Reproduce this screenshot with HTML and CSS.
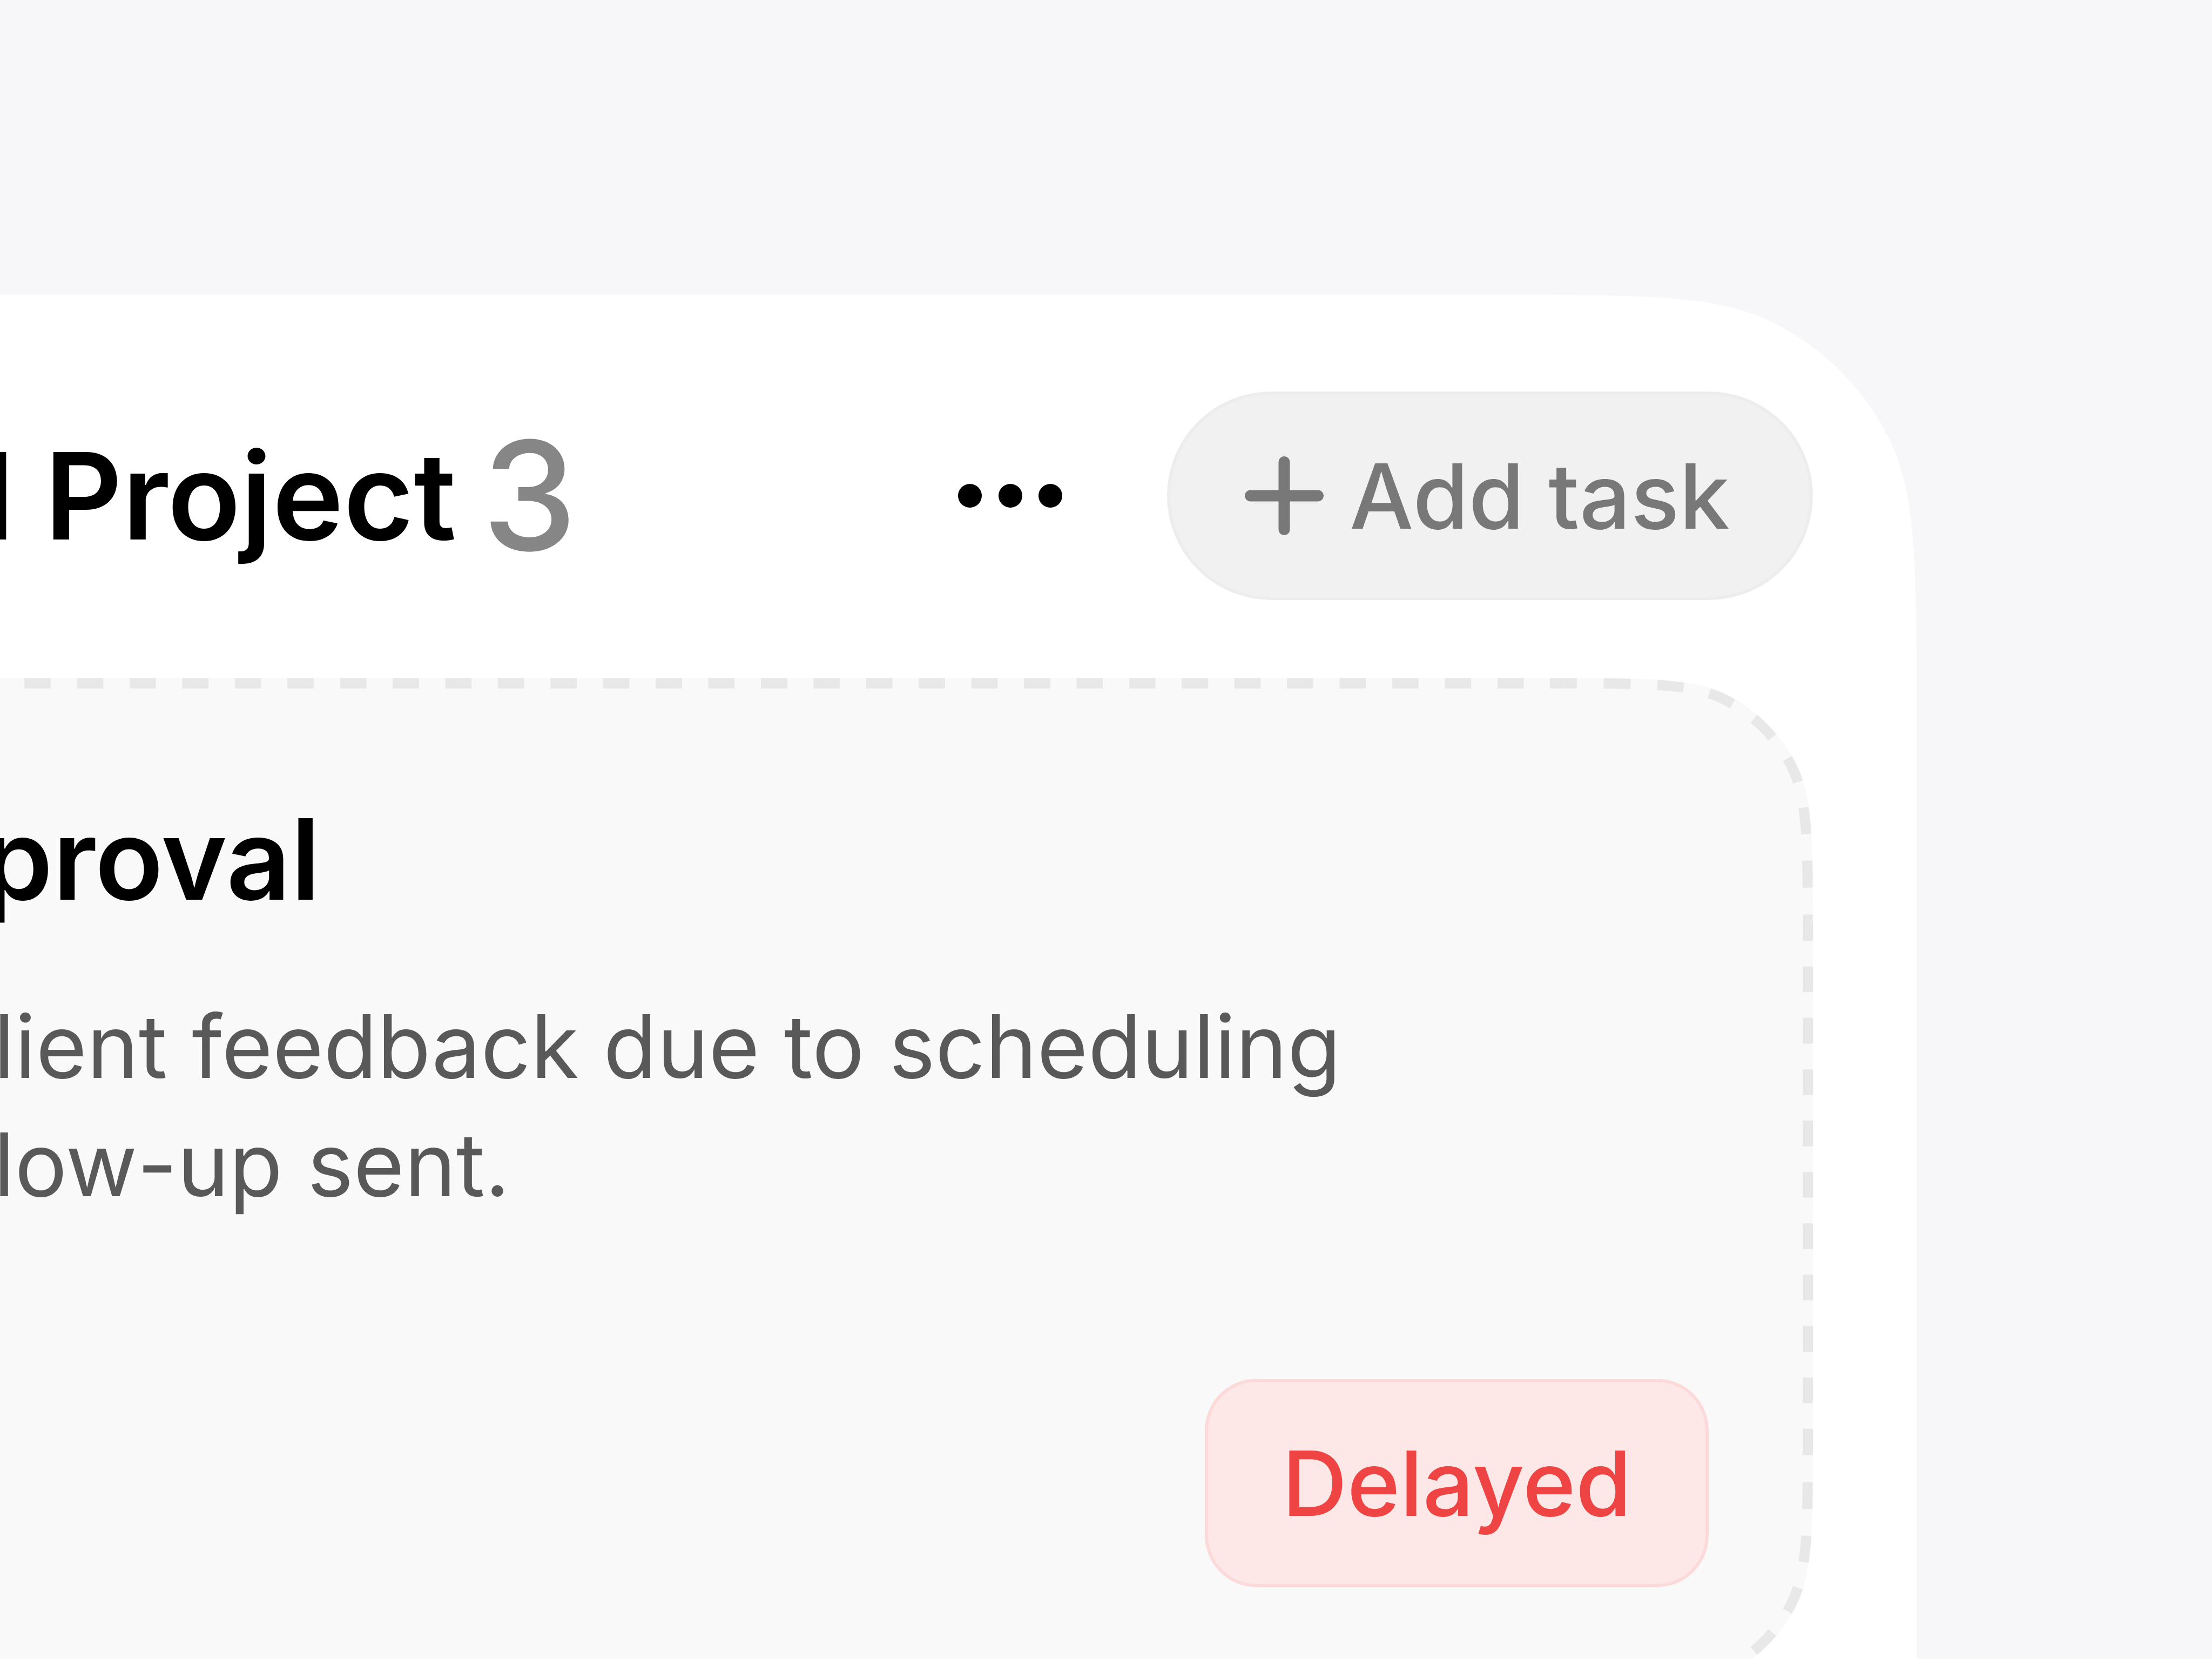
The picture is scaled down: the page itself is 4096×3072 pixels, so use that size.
FILE: index.html
```html
<!DOCTYPE html>
<html lang="en">
<head>
    <meta charset="UTF-8">
    <meta name="viewport" content="width=device-width, initial-scale=1.0">
    <title>Project</title>
    <link rel="stylesheet" href="styles.css">
</head>
<body>
    <main class="panel smooth" data-radius="482">
        <svg class="shape" aria-hidden="true"></svg>
        <header class="panel-header">
            <div class="panel-title">
                <h1>l Project</h1>
                <span class="count">3</span>
            </div>
            <button class="more" type="button" aria-label="More">
                <svg viewBox="0 0 194 44" width="194" height="44">
                    <circle cx="22" cy="22" r="22"/>
                    <circle cx="97" cy="22" r="22"/>
                    <circle cx="171" cy="22" r="22"/>
                </svg>
            </button>
            <button class="add-task" type="button">
                <svg viewBox="0 0 146 146" width="146" height="146">
                    <path d="M73 10.5v125M10.5 73h125"/>
                </svg>
                Add task
            </button>
        </header>

        <article class="task smooth" data-radius="289" data-dash="97">
            <svg class="shape" aria-hidden="true"></svg>
            <h2>proval</h2>
            <p>lient feedback due to scheduling<br>low-up sent.</p>
            <span class="status">Delayed</span>
        </article>
    </main>
    <script src="script.js"></script>
</body>
</html>
```

FILE: styles.css
```css
* {
    box-sizing: border-box;
}

body {
    margin: 0;
    height: 100vh;
    overflow: hidden;
    background: #f7f7f9;
    color: #000;
    font-family: Inter, "Liberation Sans", sans-serif;
}

h1, h2, p {
    margin: 0;
}

button {
    border: none;
    background: none;
    padding: 0;
    font: inherit;
    cursor: pointer;
}

button svg {
    display: block;
}

/* rounded shape that sits behind the content, drawn in script.js */
.smooth {
    position: relative;
    z-index: 0;
}

.shape {
    position: absolute;
    inset: 0;
    width: 100%;
    height: 100%;
    z-index: -1;
}

/* the panel runs out of the left side and the bottom of the page */
.panel {
    margin: 546px 547px 0 -1073px;
    padding: 179px 192px 960px 193px;
    fill: #fff;
}

.panel-header {
    display: flex;
    align-items: center;
    gap: 193px;
    padding-left: 848px;
}

.panel-title {
    display: flex;
    align-items: center;
    gap: 48px;
    margin-right: auto;
}

.panel-title h1 {
    font-size: 223px;
    font-weight: 600;
    line-height: 260px;
    white-space: nowrap;
}

.count {
    color: #868686;
    font-size: 280px;
    font-weight: 500;
    line-height: 260px;
}

.more {
    fill: #000;
}

.add-task {
    display: flex;
    align-items: center;
    gap: 48px;
    height: 386px;
    padding: 0 148px 0 138px;
    border: 6px solid #ededed;
    border-radius: 193px;
    background: #f1f1f1;
    color: #787878;
    font-size: 167px;
    font-weight: 500;
    white-space: nowrap;
}

.add-task svg {
    fill: none;
    stroke: #787878;
    stroke-width: 21;
    stroke-linecap: round;
}

.task {
    display: flex;
    flex-direction: column;
    margin-top: 145px;
    padding: 204px 193px 193px 848px;
    fill: #f9f9f9;
}

.task h2 {
    font-size: 208px;
    font-weight: 600;
    line-height: 260px;
}

.task p {
    margin-top: 108px;
    padding-left: 20px;
    color: #595959;
    font-size: 162px;
    line-height: 219px;
    white-space: nowrap;
}

.dash {
    fill: none;
    stroke: #e8e8e8;
    stroke-width: 38;
}

.status {
    align-self: flex-end;
    margin-top: 287px;
    padding: 0 137px;
    border: 6px solid #fcdada;
    border-radius: 96px;
    background: #fde8e7;
    color: #ef4444;
    font-size: 167px;
    font-weight: 500;
    line-height: 374px;
}
```

FILE: script.js
```js
const SMOOTHING = 0.6;

// one smoothed corner, as lengths along its two sides
function corner(r) {
    const angle = Math.PI / 2 * SMOOTHING / 2;
    const p = (1 + SMOOTHING) * r;
    const arc = Math.sin(Math.PI / 4 * (1 - SMOOTHING)) * r * Math.SQRT2;
    const c = r * Math.tan(angle / 2) * Math.cos(angle);
    const d = c * Math.tan(angle);
    const b = (p - arc - c - d) / 3;
    return { p, arc, b, c, d, a: 2 * b };
}

// the outline in eight parts: side, corner, side, corner...
function outline(w, h, r) {
    const { p, arc, a, b, c, d } = corner(r);
    const ab = a + b, abc = a + b + c, bc = b + c;
    return [
        [p, 0, `h${w - 2 * p}`],
        [w - p, 0, `c${a} 0 ${ab} 0 ${abc} ${d}a${r} ${r} 0 0 1 ${arc} ${arc}c${d} ${c} ${d} ${bc} ${d} ${abc}`],
        [w, p, `v${h - 2 * p}`],
        [w, h - p, `c0 ${a} 0 ${ab} ${-d} ${abc}a${r} ${r} 0 0 1 ${-arc} ${arc}c${-c} ${d} ${-bc} ${d} ${-abc} ${d}`],
        [w - p, h, `h${2 * p - w}`],
        [p, h, `c${-a} 0 ${-ab} 0 ${-abc} ${-d}a${r} ${r} 0 0 1 ${-arc} ${-arc}c${-d} ${-c} ${-d} ${-bc} ${-d} ${-abc}`],
        [0, h - p, `v${2 * p - h}`],
        [0, p, `c0 ${-a} 0 ${-ab} ${d} ${-abc}a${r} ${r} 0 0 1 ${arc} ${-arc}c${c} ${-d} ${bc} ${-d} ${abc} ${-d}`]
    ];
}

function draw(el) {
    const svg = el.querySelector(':scope > .shape');
    const parts = outline(el.offsetWidth, el.offsetHeight, Number(el.dataset.radius));
    const full = `M${parts[0][0]} 0` + parts.map(part => part[2]).join('') + 'z';
    svg.innerHTML = `<path d="${full}"/>`;

    if (!el.dataset.dash) return;
    svg.innerHTML += `<clipPath id="edge"><path d="${full}"/></clipPath><g clip-path="url(#edge)"></g>`;
    const group = svg.querySelector('g');
    parts.forEach(([x, y, d]) => {
        const path = document.createElementNS('http://www.w3.org/2000/svg', 'path');
        path.setAttribute('d', `M${x} ${y}${d}`);
        path.setAttribute('class', 'dash');
        group.appendChild(path);
        // whole number of dashes in each part, half a dash at both ends
        const length = path.getTotalLength();
        const dash = length / Math.round(length / el.dataset.dash) / 2;
        path.setAttribute('stroke-dasharray', dash);
        path.setAttribute('stroke-dashoffset', dash / 2);
    });
}

document.querySelectorAll('.smooth').forEach(el => {
    new ResizeObserver(() => draw(el)).observe(el);
    draw(el);
});
```
